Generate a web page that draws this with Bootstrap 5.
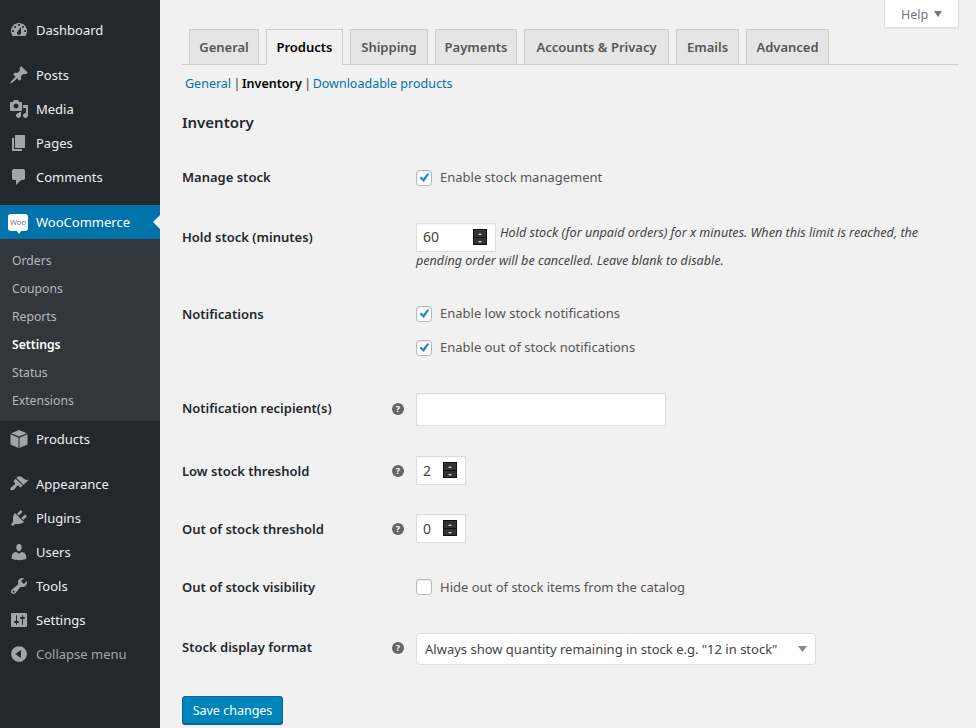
<!DOCTYPE html>
<html lang="en"><head><meta charset="utf-8"><title>Inventory</title>
<link href="https://cdn.jsdelivr.net/npm/bootstrap@5.3.0/dist/css/bootstrap.min.css" rel="stylesheet">
<style>
html,body{height:728px;overflow:hidden}
body{background:#f1f1f1;color:#444;font-family:"Noto Sans","Open Sans",sans-serif;font-size:13px}
.wp-side{width:160px;height:728px;background:#23282d;flex:none;padding-top:13px}
.wp-item{height:34px;display:flex;align-items:center;color:#eee;font-size:13px;text-decoration:none;position:relative;padding-top:2px}
.wp-item svg{width:20px;height:20px;margin:-2px 7px 0 9px;fill:#a0a5aa;flex:none}
.wp-gap{margin-top:11px}
.wp-after{margin-top:1px}
.wp-cur{background:#0073aa;color:#fff}
.wp-cur::after{content:"";position:absolute;right:0;top:10px;border:7px solid transparent;border-left:0;border-right:7px solid #f1f1f1}
.wp-badge{width:20px;height:17px;margin:-2px 8px 0 8px;background:#fff;border-radius:3px;color:#7a6a8a;font-size:7.5px;line-height:16px;text-align:center;position:relative;flex:none}
.wp-badge::after{content:"";position:absolute;left:8px;bottom:-3px;border-top:4px solid #fff;border-left:3px solid transparent;border-right:3px solid transparent}
.wp-sub{background:#32373c;padding:8px 0 6px;height:182px}
.wp-sub a{display:block;height:28px;line-height:28px;padding-left:12px;color:#b4b9be;font-size:12.2px;text-decoration:none}
.wp-sub a.on{color:#fff;font-weight:600}
.wp-col{color:#a0a5aa}
.wp-main{flex:1;padding:0 17px 0 22px;min-width:0}
.help-tab{width:75px;height:28px;background:#fff;border:1px solid #ddd;border-top:0;color:#72777c;font-size:12.5px;display:flex;align-items:center;justify-content:center;gap:6px;padding-top:3px;box-shadow:0 1px 1px rgba(0,0,0,.04)}
.help-tab i{border-top:6px solid #72777c;border-left:4.5px solid transparent;border-right:4.5px solid transparent;margin-top:-3px}
.tabs-bar{margin-top:1px;height:36px;border-bottom:1px solid #ccc;padding-left:7px;gap:7px}
.tab-x{height:36px;background:#e5e5e5;border:1px solid #ccc;color:#555;font-size:13px;font-weight:600;line-height:34px;text-decoration:none;display:block;text-align:center}
.tab-x.act{background:#f1f1f1;border-bottom-color:#f1f1f1;color:#000}
.sub-nav{margin-top:8px;height:22px;line-height:22px;padding-left:3px;font-size:12.5px;color:#444;display:flex}
.sub-nav a{color:#0073aa;text-decoration:none}
.sub-nav b{color:#000;font-weight:600}
.sub-sep{margin:0 1.5px 0 2.500px}
.sec-h{font-size:15px;font-weight:600;color:#23282d;margin:15px 0 0;height:24px;line-height:24px}
.f-row{display:flex;align-items:center}
.f-top{align-items:flex-start}
.f-lab{width:234px;flex:none;font-size:13px;font-weight:600;color:#23282d;position:relative}
.f-up1{padding-bottom:1px}
.f-up2{padding-bottom:2px}
.f-dn{padding-top:4px}
.f-dn .tip{top:7px}
.f-hold{padding-top:9px}
.tip{position:absolute;left:210px;top:4px;width:12px;height:12px;border-radius:50%;background:#666;color:#fff;font-size:9px;font-weight:700;line-height:12px;text-align:center}
.chk{display:flex;align-items:center;color:#555;font-size:13px;height:16px;margin:0}
.chk input{width:16px;height:16px;margin:0 8px 0 0;border:1px solid #b4b9be;border-radius:0;background-color:#fff;box-shadow:inset 0 1px 2px rgba(0,0,0,.1);flex:none}
.chk input:checked{background-color:#fff;border-color:#b4b9be;background-size:16px;background-image:url("data:image/svg+xml,%3Csvg xmlns='http://www.w3.org/2000/svg' viewBox='0 0 16 16'%3E%3Cpath d='M3.500 8.200l1.600-1.600 2 2L11.600 3l1.500 1.300-5.300 7.800z' fill='%231e8cbe'/%3E%3C/svg%3E")}
.chk-col{display:flex;flex-direction:column;gap:18px;padding-top:1px}
.num-box{display:flex;align-items:center;background:#fff;border:1px solid #ddd;height:29px;flex:none;box-shadow:inset 0 1px 2px rgba(0,0,0,.05)}
.num-box span{flex:1;padding-left:6px;font-size:14px;color:#444;font-style:normal}
.spin{width:14px;height:16px;background:#111;margin-right:8px;display:flex;flex-direction:column;gap:1px;padding:1px;flex:none}
.spin i{flex:1;background:#333;position:relative;display:block}
.spin i::after{content:"";position:absolute;left:4px;top:3px;border-left:2px solid transparent;border-right:2px solid transparent}
.spin i.u::after{border-bottom:2px solid #ccc}
.spin i.d::after{border-top:2px solid #ccc}
.desc-t{font-style:italic;color:#444;font-size:12.6px;line-height:28px;width:510px}
.desc-t .num-box{float:left;margin:4px 4px -6px 0}
.nb-80{width:80px}
.nb-50{width:50px}
.text-x{width:250px;height:33px;border:1px solid #ddd;background:#fff;border-radius:0;box-shadow:inset 0 1px 2px rgba(0,0,0,.05)}
.sel-x{width:400px;height:32px;border:1px solid #ddd;border-radius:4px;background-color:#fff;font-size:13px;color:#444;padding:0 24px 0 8px;line-height:30px;background-position:right 8px center;background-size:9px 6px;background-image:url("data:image/svg+xml,%3Csvg xmlns='http://www.w3.org/2000/svg' viewBox='0 0 9 6'%3E%3Cpath d='M0 0h9L4.500 6z' fill='%23888'/%3E%3C/svg%3E")}
.save-x{width:101px;height:28px;padding:2px 0 0;background:#0085ba;border:1px solid #006799;border-radius:3px;color:#fff;font-size:12.5px;box-shadow:0 1px 0 #006799}
.m31{margin-top:31px}.m30{margin-top:30px}.m29{margin-top:29px}.m34{margin-top:34px}.m35{margin-top:35px}.m36{margin-top:36px}.m37{margin-top:37px}
.t70{width:70px}.t77{width:77px}.t78{width:78px}.t82{width:82px}.t145{width:145px}.t63{width:63px}.t83{width:83px}
</style></head><body>
<div class="d-flex">
<nav class="wp-side">
<a class="wp-item" href="#"><svg viewBox="0 0 20 20"><path fill-rule="evenodd" d="M3.760 16h12.480c1.100-1.370 1.760-3.110 1.760-5 0-4.420-3.580-8-8-8s-8 3.580-8 8c0 1.890.660 3.630 1.760 5zM10 4c.550 0 1 .450 1 1s-.450 1-1 1-1-.450-1-1 .450-1 1-1zM6 6c.550 0 1 .450 1 1s-.450 1-1 1-1-.450-1-1 .450-1 1-1zm8 0c.550 0 1 .450 1 1s-.450 1-1 1-1-.450-1-1 .450-1 1-1zm-5.370 5.550L12 7v6c0 1.100-.900 2-2 2s-2-.900-2-2c0-.570.240-1.080.630-1.450zM4 10c.550 0 1 .450 1 1s-.450 1-1 1-1-.450-1-1 .450-1 1-1zm12 0c.550 0 1 .450 1 1s-.450 1-1 1-1-.450-1-1 .450-1 1-1z"/></svg>Dashboard</a>
<a class="wp-item wp-gap" href="#"><svg viewBox="0 0 20 20"><path d="M10.440 3.020l1.820-1.820 6.360 6.350-1.830 1.820c-1.050-.680-2.480-.570-3.410.360l-.750.750c-.920.930-1.040 2.350-.350 3.410l-1.830 1.820-2.410-2.410-2.800 2.790c-.420.420-3.380 2.710-3.800 2.290s1.860-3.390 2.280-3.810l2.790-2.790L4.100 9.360l1.830-1.820c1.050.690 2.480.570 3.400-.360l.750-.750c.930-.920 1.050-2.350.360-3.410z"/></svg>Posts</a>
<a class="wp-item" href="#"><svg viewBox="0 0 20 20"><path fill-rule="evenodd" d="M13 11V4c0-.550-.450-1-1-1h-1.670L9 1H5L3.670 3H2c-.550 0-1 .450-1 1v7c0 .550.450 1 1 1h10c.550 0 1-.450 1-1zM7 4.500c1.380 0 2.500 1.120 2.500 2.500S8.380 9.500 7 9.500 4.500 8.380 4.500 7 5.620 4.500 7 4.500zM14 6h5v10.500c0 1.380-1.120 2.500-2.500 2.500S14 17.880 14 16.500s1.120-2.500 2.500-2.500c.170 0 .340.020.500.050V9h-3V6zm-4 8.050V13h2v3.500c0 1.380-1.120 2.500-2.500 2.500S7 17.880 7 16.500 8.120 14 9.500 14c.170 0 .340.020.500.050z"/></svg>Media</a>
<a class="wp-item" href="#"><svg viewBox="0 0 20 20"><path d="M6 15V2h10v13H6zm-1 1h8v2H3V5h2v11z"/></svg>Pages</a>
<a class="wp-item" href="#"><svg viewBox="0 0 20 20"><path d="M5 2h9c1.100 0 2 .900 2 2v7c0 1.100-.900 2-2 2h-2l-5 5v-5H5c-1.100 0-2-.900-2-2V4c0-1.100.900-2 2-2z"/></svg>Comments</a>
<a class="wp-item wp-gap wp-cur" href="#"><span class="wp-badge">Woo</span>WooCommerce</a>
<div class="wp-sub"><a href="#">Orders</a><a href="#">Coupons</a><a href="#">Reports</a><a class="on" href="#">Settings</a><a href="#">Status</a><a href="#">Extensions</a></div>
<a class="wp-item wp-after" href="#"><svg viewBox="0 0 20 20"><path d="M10 1l8 3.200-8 3.400-8-3.400zM1.500 5.300l8 3.400V19l-8-3.600zM18.500 5.300v10.100l-8 3.600V8.700z"/></svg>Products</a>
<a class="wp-item wp-gap" href="#"><svg viewBox="0 0 20 20"><path d="M14.480 11.060L7.410 3.990l1.500-1.500c.500-.560 2.300-.470 3.510.320 1.210.800 1.430 1.280 2.910 2.100 1.180.640 2.450 1.260 4.450.850zm-.710.710L6.700 4.700 4.930 6.470c-.390.390-.390 1.020 0 1.410l1.060 1.060c.390.390.390 1.030 0 1.420-.600.600-1.430 1.150-2.210 1.690-.350.260-.700.530-1.010.840C1.430 13.230.910 15.240 1.670 16.010c.760.760 2.780.240 3.990-.970.310-.310.580-.660.840-1.010.580-.780 1.090-1.610 1.690-2.210.390-.390 1.020-.390 1.410 0l1.060 1.060c.390.390 1.020.390 1.410 0z"/></svg>Appearance</a>
<a class="wp-item" href="#"><svg viewBox="0 0 20 20"><path d="M13.110 4.360L9.870 7.600 8 5.730l3.240-3.240c.350-.340 1.050-.200 1.560.320.520.510.660 1.210.310 1.550zm-8 1.770l.910-1.120 9.010 9.010-1.190.840c-.710.710-2.630 1.160-3.820 1.160H6.140L4.900 17.260c-.590.590-1.540.590-2.120 0-.590-.580-.590-1.530 0-2.120l1.240-1.240v-3.880c0-1.130.400-3.190 1.090-3.890zm7.260 3.970l3.240-3.240c.340-.350 1.040-.210 1.550.310.520.510.660 1.210.310 1.550l-3.240 3.250z"/></svg>Plugins</a>
<a class="wp-item" href="#"><svg viewBox="0 0 20 20"><path d="M10 9.250c-2.270 0-2.730-3.440-2.730-3.440C7 4.020 7.820 2 9.970 2c2.160 0 2.980 2.020 2.710 3.810 0 0-.410 3.440-2.680 3.440zm0 2.570L12.720 10c2.390 0 4.520 2.330 4.520 4.530v2.490s-3.650 1.130-7.240 1.130c-3.650 0-7.240-1.130-7.240-1.130v-2.490c0-2.250 1.940-4.480 4.470-4.480z"/></svg>Users</a>
<a class="wp-item" href="#"><svg viewBox="0 0 20 20"><path fill-rule="evenodd" d="M16.680 9.770c-1.340 1.340-3.300 1.670-4.950.990l-5.410 6.520c-.990.990-2.590.990-3.580 0s-.990-2.590 0-3.570l6.520-5.420c-.680-1.650-.350-3.610.990-4.950 1.280-1.280 3.120-1.620 4.720-1.060l-2.890 2.890 2.820 2.820 2.860-2.870c.530 1.580.180 3.390-1.080 4.650zM3.810 16.210c.400.390 1.040.390 1.430 0 .400-.400.400-1.040 0-1.430-.390-.400-1.030-.400-1.430 0-.390.390-.390 1.030 0 1.430z"/></svg>Tools</a>
<a class="wp-item" href="#"><svg viewBox="0 0 20 20"><path fill-rule="evenodd" d="M18 16V4c0-.550-.450-1-1-1H3c-.550 0-1 .450-1 1v12c0 .550.450 1 1 1h14c.550 0 1-.450 1-1zM8 11h1c.550 0 1 .450 1 1s-.450 1-1 1H8v1.500c0 .280-.220.500-.500.500s-.500-.220-.500-.500V13H6c-.550 0-1-.450-1-1s.450-1 1-1h1V5.500c0-.280.220-.500.500-.500s.500.220.500.500V11zm5-2h-1c-.550 0-1-.450-1-1s.450-1 1-1h1V5.500c0-.280.220-.500.500-.500s.500.220.500.500V7h1c.550 0 1 .450 1 1s-.450 1-1 1h-1v5.500c0 .280-.220.500-.500.500s-.500-.220-.500-.500V9z"/></svg>Settings</a>
<a class="wp-item wp-col" href="#"><svg viewBox="0 0 20 20"><path fill-rule="evenodd" d="M10 2.160c4.330 0 7.840 3.510 7.840 7.840s-3.510 7.840-7.840 7.840S2.160 14.330 2.160 10 5.710 2.160 10 2.160zm2 11.720V6.120L6.180 9.970z"/></svg>Collapse menu</a>
</nav>
<main class="wp-main">
<div class="d-flex justify-content-end"><div class="help-tab">Help <i></i></div></div>
<div class="tabs-bar d-flex">
<a class="tab-x t70" href="#">General</a><a class="tab-x act t77" href="#">Products</a><a class="tab-x t78" href="#">Shipping</a><a class="tab-x t82" href="#">Payments</a><a class="tab-x t145" href="#">Accounts &amp; Privacy</a><a class="tab-x t63" href="#">Emails</a><a class="tab-x t83" href="#">Advanced</a>
</div>
<div class="sub-nav"><a href="#">General</a><span class="sub-sep">|</span><b>Inventory</b><span class="sub-sep">|</span><a href="#">Downloadable products</a></div>
<h2 class="sec-h">Inventory</h2>
<form>
<div class="f-row m34"><div class="f-lab">Manage stock</div><label class="chk"><input class="form-check-input" type="checkbox" checked>Enable stock management</label></div>
<div class="f-row f-top m31"><div class="f-lab f-hold">Hold stock (minutes)</div><div class="desc-t"><div class="num-box nb-80"><span>60</span><div class="spin"><i class="u"></i><i class="d"></i></div></div>Hold stock (for unpaid orders) for x minutes. When this limit is reached, the pending order will be cancelled. Leave blank to disable.</div></div>
<div class="f-row f-top m30"><div class="f-lab">Notifications</div><div class="chk-col"><label class="chk"><input class="form-check-input" type="checkbox" checked>Enable low stock notifications</label><label class="chk"><input class="form-check-input" type="checkbox" checked>Enable out of stock notifications</label></div></div>
<div class="f-row m37"><div class="f-lab f-up1">Notification recipient(s)<span class="tip">?</span></div><input class="text-x" type="text" aria-label="Recipient"></div>
<div class="f-row m30"><div class="f-lab f-dn">Low stock threshold<span class="tip">?</span></div><div class="num-box nb-50"><span>2</span><div class="spin"><i class="u"></i><i class="d"></i></div></div></div>
<div class="f-row m29"><div class="f-lab f-dn">Out of stock threshold<span class="tip">?</span></div><div class="num-box nb-50"><span>0</span><div class="spin"><i class="u"></i><i class="d"></i></div></div></div>
<div class="f-row m35"><div class="f-lab">Out of stock visibility</div><label class="chk"><input class="form-check-input" type="checkbox">Hide out of stock items from the catalog</label></div>
<div class="f-row m36"><div class="f-lab f-up2">Stock display format<span class="tip">?</span></div><select class="form-select sel-x" aria-label="Format"><option>Always show quantity remaining in stock e.g. "12 in stock"</option></select></div>
<button type="button" class="btn save-x m31">Save changes</button>
</form>
</main>
</div>
<script src="https://cdn.jsdelivr.net/npm/bootstrap@5.3.0/dist/js/bootstrap.bundle.min.js"></script>
</body></html>
